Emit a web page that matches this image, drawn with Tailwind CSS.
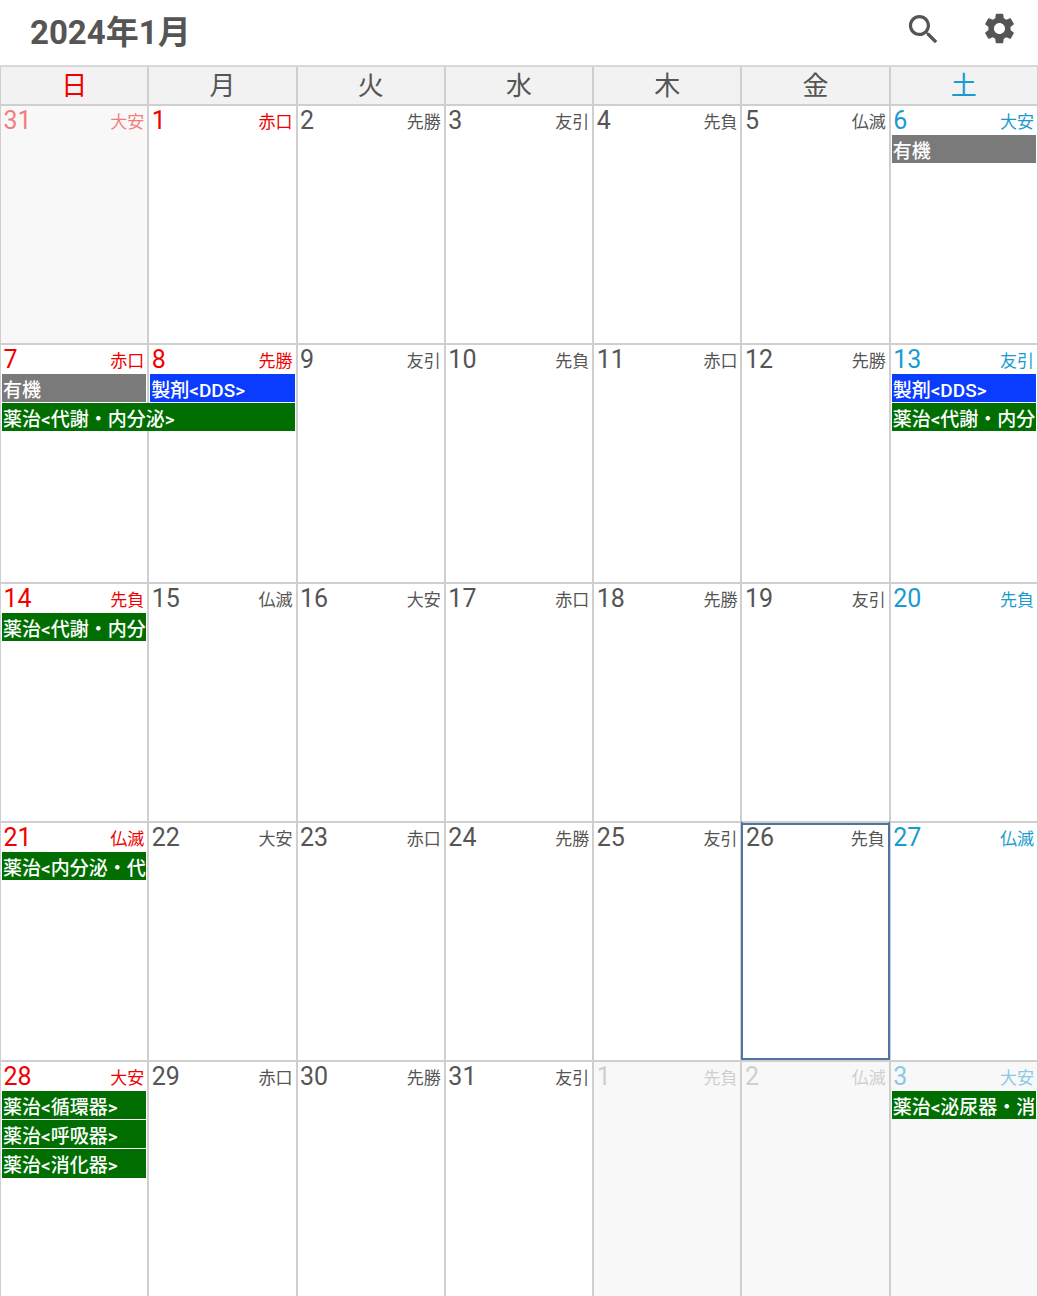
<!DOCTYPE html>
<html lang="ja">
<head>
    <meta charset="UTF-8">
    <title>カレンダー</title>
    <script src="https://cdn.jsdelivr.net/npm/@tailwindcss/browser@4"></script>
</head>
<body class="bg-white overflow-hidden font-['Roboto','Noto_Sans_CJK_JP',sans-serif] text-[#555]">
    <div class="w-[1038px] h-[1296px] overflow-hidden">
        <!-- Title bar -->
        <div class="h-[65px] flex items-center pl-[30px] pr-[20.5px]">
            <h1 class="text-[33px] leading-none font-bold">2024年1月</h1>
            <svg class="ml-auto -mt-[6px] w-[39px] h-[39px]" viewBox="0 0 24 24" fill="#555"><path d="M15.5 14h-.79l-.28-.27C15.41 12.59 16 11.11 16 9.5 16 5.91 13.09 3 9.5 3S3 5.91 3 9.5 5.91 16 9.5 16c1.61 0 3.09-.59 4.23-1.57l.27.28v.79l5 4.99L20.49 19l-4.99-5zm-6 0C7.01 14 5 11.99 5 9.5S7.01 5 9.5 5 14 7.01 14 9.5 11.99 14 9.5 14z"/></svg>
            <svg class="ml-[38px] -mt-[8px] w-[37px] h-[37px]" viewBox="0 0 24 24" fill="#555"><path d="M19.14 12.94c.04-.3.06-.61.06-.94 0-.32-.02-.64-.07-.94l2.03-1.58a.49.49 0 0 0 .12-.61l-1.92-3.32a.488.488 0 0 0-.59-.22l-2.39.96c-.5-.38-1.03-.7-1.62-.94l-.36-2.54a.484.484 0 0 0-.48-.41h-3.84c-.24 0-.43.17-.47.41l-.36 2.54c-.59.24-1.13.57-1.62.94l-2.39-.96c-.22-.08-.47 0-.59.22L2.74 8.87c-.12.21-.08.47.12.61l2.03 1.58c-.05.3-.09.63-.09.94s.02.64.07.94l-2.03 1.58a.49.49 0 0 0-.12.61l1.92 3.32c.12.22.37.29.59.22l2.39-.96c.5.38 1.03.7 1.62.94l.36 2.54c.05.24.24.41.48.41h3.84c.24 0 .44-.17.47-.41l.36-2.54c.59-.24 1.13-.56 1.62-.94l2.39.96c.22.08.47 0 .59-.22l1.92-3.32c.12-.22.07-.47-.12-.61l-2.01-1.58zM12 15.6c-1.98 0-3.6-1.62-3.6-3.6s1.62-3.6 3.6-3.6 3.6 1.62 3.6 3.6-1.62 3.6-3.6 3.6z"/></svg>
        </div>

        <!-- Weekday header -->
        <div id="head" class="grid grid-cols-7 h-[39px] border-t-2 border-[#d8d8d8]"></div>

        <!-- Weeks -->
        <div id="weeks"></div>
    </div>

    <script>
        const RED = 'text-[#f00000]';
        const BLUE = 'text-[#1a9bcf]';
        const headNames = ['日', '月', '火', '水', '木', '金', '土'];

        const gray = 'bg-[#7a7a7a]';
        const navy = 'bg-[#0a3cff]';
        const green = 'bg-[#006e00]';

        // day: [number, rokuyo, options]
        const weeks = [
            { days: [[31, '大安', { faded: 1 }], [1, '赤口', { holiday: 1 }], [2, '先勝'], [3, '友引'], [4, '先負'], [5, '仏滅'], [6, '大安']],
              events: [{ pos: 'col-start-7 row-start-2 col-span-1', color: gray, text: '有機' }] },
            { days: [[7, '赤口'], [8, '先勝', { holiday: 1 }], [9, '友引'], [10, '先負'], [11, '赤口'], [12, '先勝'], [13, '友引']],
              events: [
                { pos: 'col-start-1 row-start-2 col-span-1', color: gray, text: '有機' },
                { pos: 'col-start-2 row-start-2 col-span-1', color: navy, text: '製剤&lt;DDS&gt;' },
                { pos: 'col-start-1 row-start-3 col-span-2', color: green, text: '薬治&lt;代謝・内分泌&gt;' },
                { pos: 'col-start-7 row-start-2 col-span-1', color: navy, text: '製剤&lt;DDS&gt;' },
                { pos: 'col-start-7 row-start-3 col-span-1', color: green, text: '薬治&lt;代謝・内分' }
              ] },
            { days: [[14, '先負'], [15, '仏滅'], [16, '大安'], [17, '赤口'], [18, '先勝'], [19, '友引'], [20, '先負']],
              events: [{ pos: 'col-start-1 row-start-2 col-span-1', color: green, text: '薬治&lt;代謝・内分' }] },
            { days: [[21, '仏滅'], [22, '大安'], [23, '赤口'], [24, '先勝'], [25, '友引'], [26, '先負', { today: 1 }], [27, '仏滅']],
              events: [{ pos: 'col-start-1 row-start-2 col-span-1', color: green, text: '薬治&lt;内分泌・代' }] },
            { days: [[28, '大安'], [29, '赤口'], [30, '先勝'], [31, '友引'], [1, '先負', { faded: 1 }], [2, '仏滅', { faded: 1 }], [3, '大安', { faded: 1 }]],
              events: [
                { pos: 'col-start-1 row-start-2 col-span-1', color: green, text: '薬治&lt;循環器&gt;' },
                { pos: 'col-start-1 row-start-3 col-span-1', color: green, text: '薬治&lt;呼吸器&gt;' },
                { pos: 'col-start-1 row-start-4 col-span-1', color: green, text: '薬治&lt;消化器&gt;' },
                { pos: 'col-start-7 row-start-2 col-span-1', color: green, text: '薬治&lt;泌尿器・消' }
              ] }
        ];

        document.getElementById('head').innerHTML = headNames.map((name, i) => {
            const color = i === 0 ? RED : i === 6 ? BLUE : '';
            return `<div class="flex items-center justify-center bg-[#f2f2f2] border-x border-[#cfcfcf] text-[26px] ${color}">${name}</div>`;
        }).join('');

        const colStarts = ['col-start-1', 'col-start-2', 'col-start-3', 'col-start-4', 'col-start-5', 'col-start-6', 'col-start-7'];

        document.getElementById('weeks').innerHTML = weeks.map(week => {
            const cells = week.days.map((d, i) => {
                const [num, rokuyo, opt = {}] = d;
                const color = i === 0 || opt.holiday ? RED : i === 6 ? BLUE : '';
                const bg = opt.faded ? 'bg-[#f8f8f8]' : 'bg-white';
                const fade = opt.faded ? (i === 0 || i === 6 ? 'opacity-50' : 'opacity-25') : '';
                const frame = opt.today
                    ? 'border-t-2 border-t-[#cfcfcf] border-x-2 border-b-2 border-x-[#4f74a3] border-b-[#4f74a3] shadow-[inset_0_2px_0_#4f74a3]'
                    : 'border-x border-t-2 border-[#cfcfcf]';
                return `<div class="${colStarts[i]} row-start-1 row-span-full ${frame} ${bg}">
                    <div class="flex justify-between items-start pl-[2.5px] pr-[3px] h-[28px] ${color}">
                        <span class="text-[25px] leading-[29px] ${fade}">${num}</span>
                        <span class="text-[17px] leading-[32px] ${fade}">${rokuyo}</span>
                    </div>
                </div>`;
            }).join('');
            const events = week.events.map(e =>
                `<div class="${e.pos} z-20 mx-[2px] h-[28.5px] pl-[1px] overflow-hidden whitespace-nowrap text-white text-[19px] font-medium leading-[34px] ${e.color}">${e.text}</div>`
            ).join('');
            return `<div class="grid grid-cols-7 grid-rows-[30.5px_29.3px_29.3px_29.3px_1fr] h-[239px]">${cells}${events}</div>`;
        }).join('');
    </script>
</body>
</html>
